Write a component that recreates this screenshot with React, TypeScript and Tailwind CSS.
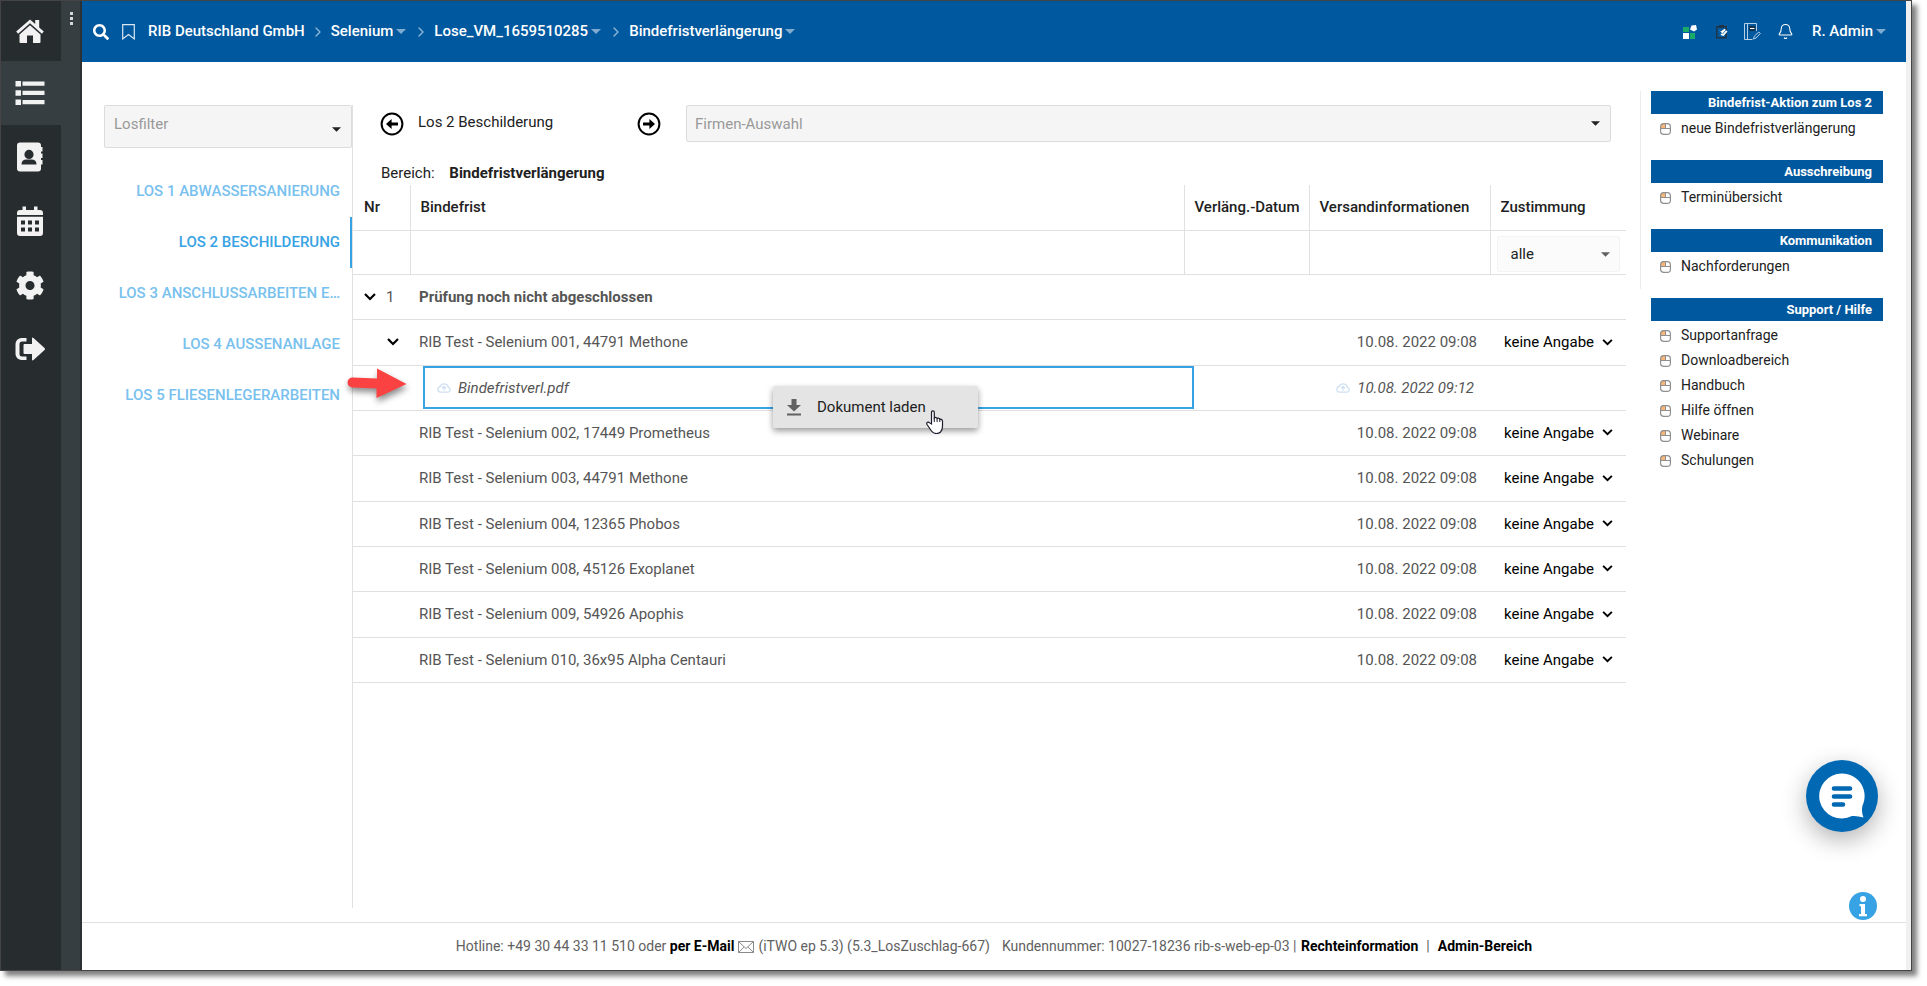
import { useState } from "react";
import { FaSearch } from "react-icons/fa";
import { Bell, ChevronRight } from "lucide-react";

const lots = [
  "Los 1 Abwassersanierung",
  "Los 2 Beschilderung",
  "Los 3 Anschlussarbeiten E…",
  "Los 4 Aussenanlage",
  "Los 5 Fliesenlegerarbeiten",
];

const crumbs = [
  { label: "RIB Deutschland GmbH", menu: false },
  { label: "Selenium", menu: true },
  { label: "Lose_VM_1659510285", menu: true },
  { label: "Bindefristverlängerung", menu: true },
];

const bidders = [
  "RIB Test - Selenium 002, 17449 Prometheus",
  "RIB Test - Selenium 003, 44791 Methone",
  "RIB Test - Selenium 004, 12365 Phobos",
  "RIB Test - Selenium 008, 45126 Exoplanet",
  "RIB Test - Selenium 009, 54926 Apophis",
  "RIB Test - Selenium 010, 36x95 Alpha Centauri",
];

const panels = [
  { title: "Bindefrist-Aktion zum Los 2", links: ["neue Bindefristverlängerung"] },
  { title: "Ausschreibung", links: ["Terminübersicht"] },
  { title: "Kommunikation", links: ["Nachforderungen"] },
  {
    title: "Support / Hilfe",
    links: ["Supportanfrage", "Downloadbereich", "Handbuch", "Hilfe öffnen", "Webinare", "Schulungen"],
  },
];

const Caret = ({ className }: { className: string }) => (
  <svg viewBox="0 0 10 5" className={className} fill="currentColor" aria-hidden="true">
    <path d="M0 0h10L5 5z" />
  </svg>
);

const Chevron = ({ className }: { className: string }) => (
  <svg viewBox="0 0 12 8" className={className} fill="none" stroke="currentColor" strokeWidth="2.2" aria-hidden="true">
    <path d="M1 1l5 5 5-5" />
  </svg>
);

const CircleArrow = ({ flip }: { flip?: boolean }) => (
  <svg viewBox="0 0 24 24" className={flip ? "h-6 w-6 rotate-180" : "h-6 w-6"} aria-hidden="true">
    <circle cx="12" cy="12" r="10.4" fill="none" stroke="#000" strokeWidth="2" />
    <path d="M6 12l5.6-5v3.5H18v3h-6.4V17z" fill="#000" />
  </svg>
);

const CloudIcon = () => (
  <svg viewBox="0 0 14 11" className="h-[11px] w-[14px]" fill="none" stroke="#cfe0f3" strokeWidth="1.3" aria-hidden="true">
    <path d="M3.3 10.2h7.6a2.5 2.5 0 0 0 .5-4.9A4.3 4.3 0 0 0 3.2 4.5a2.9 2.9 0 0 0 .1 5.7z" />
    <path d="M7 8.5v-4M5 6.3l2-2 2 2" />
  </svg>
);

const MouseIcon = () => (
  <svg viewBox="0 0 11 12" className="h-3 w-[11px]" aria-hidden="true">
    <path d="M3.5.6h2v4.4H.6V3.5Q.6.6 3.5.6z" fill="#f9b678" />
    <rect x=".6" y=".6" width="9.8" height="10.8" rx="3.2" fill="none" stroke="#8f8f8f" strokeWidth="1.2" />
    <path d="M.6 5.5h9.8M5.5.6v4.9" stroke="#8f8f8f" fill="none" />
  </svg>
);

const navIcons = [
  {
    label: "Startseite",
    icon: (
      <svg viewBox="0 0 30 26" className="h-[26px] w-[30px]" fill="#f2f2f2">
        <path d="M15 1.5 20.2 6V2h4v7.5l4.6 4.1-1.9 2.2L15 5.2 3.1 15.8l-1.9-2.2z" />
        <path d="M15 7.2 25.5 16.5V24q0 1-1 1H18v-7.5h-6V25H5.5q-1 0-1-1v-7.5z" />
      </svg>
    ),
  },
  {
    label: "Liste",
    icon: (
      <svg viewBox="0 0 30 26" className="h-[26px] w-[30px]" fill="#f2f2f2">
        <path d="M.5 1H6v5.5H.5zM.5 10.2H6v5.5H.5zM.5 19.4H6v5.5H.5zM7.5 1.6h22v4.2h-22zM7.5 10.8h22V15h-22zM7.5 20h22v4.2h-22z" />
      </svg>
    ),
  },
  {
    label: "Kontakte",
    icon: (
      <svg viewBox="0 0 28 30" className="h-[30px] w-7" fill="#f2f2f2">
        <path
          fillRule="evenodd"
          d="M4 .5h18a3 3 0 0 1 3 3V5h1.5v4.5H25v2h1.5V16H25v2h1.5v4.5H25v4a3 3 0 0 1-3 3H4a3 3 0 0 1-3-3v-23a3 3 0 0 1 3-3zM13 7.8a4.6 4.6 0 1 0 0 9.2 4.6 4.6 0 0 0 0-9.2zM5.500 22.500h15q0-5-5-5h-5q-5 0-5 5z"
        />
      </svg>
    ),
  },
  {
    label: "Kalender",
    icon: (
      <svg viewBox="0 0 28 30" className="h-[30px] w-7" fill="#f2f2f2">
        <path d="M6.5.5H10V4h8V.5h3.5V4H24a3 3 0 0 1 3 3v2H1V7a3 3 0 0 1 3-3h2.5z" />
        <path
          fillRule="evenodd"
          d="M1 10.8h26V27a3 3 0 0 1-3 3H4a3 3 0 0 1-3-3zM5 14.5v4h4v-4zM12 14.5v4h4v-4zM19 14.5v4h4v-4zM5 21.5v4h4v-4zM12 21.5v4h4v-4zM19 21.5v4h4v-4z"
        />
      </svg>
    ),
  },
  {
    label: "Einstellungen",
    icon: (
      <svg viewBox="16 0 480 512" className="h-[29px] w-[28px]" fill="#f2f2f2">
        <path d="M487.4 315.7l-42.6-24.6c4.3-23.2 4.3-47 0-70.2l42.6-24.6c4.9-2.8 7.1-8.6 5.5-14-11.1-35.6-30-67.8-54.7-94.6-3.8-4.1-10-5.1-14.8-2.3L380.8 110c-17.9-15.4-38.5-27.3-60.8-35.1V25.8c0-5.6-3.9-10.5-9.4-11.7-36.7-8.2-74.3-7.8-109.2 0-5.5 1.2-9.4 6.1-9.4 11.7V75c-22.2 7.9-42.8 19.8-60.8 35.1L88.7 85.5c-4.9-2.8-11-1.9-14.8 2.3-24.7 26.7-43.6 58.9-54.7 94.6-1.7 5.4.6 11.2 5.5 14L67.3 221c-4.3 23.2-4.3 47 0 70.2l-42.6 24.6c-4.9 2.8-7.1 8.6-5.5 14 11.1 35.6 30 67.8 54.7 94.6 3.8 4.1 10 5.1 14.8 2.3l42.6-24.6c17.9 15.4 38.5 27.3 60.8 35.1v49.2c0 5.6 3.9 10.5 9.4 11.7 36.7 8.2 74.3 7.8 109.2 0 5.5-1.2 9.4-6.1 9.4-11.7v-49.2c22.2-7.9 42.8-19.8 60.8-35.1l42.6 24.6c4.9 2.8 11 1.9 14.8-2.3 24.7-26.7 43.6-58.9 54.7-94.6 1.5-5.5-.7-11.3-5.6-14.1zM256 336c-44.1 0-80-35.9-80-80s35.9-80 80-80 80 35.9 80 80-35.9 80-80 80z" />
      </svg>
    ),
  },
  {
    label: "Abmelden",
    icon: (
      <svg viewBox="0 0 30 24" className="h-6 w-[30px]" fill="#f2f2f2">
        <path d="M11.5 1v3.5H7A2.5 2.5 0 0 0 4.5 7v10A2.5 2.5 0 0 0 7 19.5h4.5V23h-5a6 6 0 0 1-6-6V7a6 6 0 0 1 6-6z" />
        <path d="M17 1.5q0-1.5 1.5-.5l11 10q1 1 0 2l-11 10q-1.5 1-1.5-.5V17H9.5q-1 0-1-1V8q0-1 1-1H17z" />
      </svg>
    ),
  },
];

const ConsentCell = ({ name }: { name: string }) => (
  <div className="relative ml-3.5 flex w-[109px] items-center">
    <select
      aria-label={`Zustimmung ${name}`}
      className="w-full appearance-none bg-transparent text-[15px] leading-5 text-black"
    >
      <option>keine Angabe</option>
      <option>Ja</option>
      <option>Nein</option>
    </select>
    <Chevron className="pointer-events-none absolute right-0 h-[7px] w-[11px] text-black" />
  </div>
);

const Header = () => (
  <header className="flex h-[61px] items-center bg-[#00589e] pr-5 pl-[11px] text-[15px] font-medium text-white">
    <button aria-label="Suche">
      <FaSearch className="h-4 w-4" />
    </button>
    <button aria-label="Lesezeichen" className="ml-[13px]">
      <svg viewBox="0 0 13 16" className="h-4 w-[13px]" fill="none" stroke="#dbe8f3" strokeWidth="1.2">
        <path d="M.7.7h11.6v14.2L6.500 10.500.7 14.900z" />
      </svg>
    </button>
    <nav className="ml-[13px] flex items-center" aria-label="Pfad">
      {crumbs.map((crumb, index) => (
        <div key={crumb.label} className="flex items-center">
          {index > 0 && <ChevronRight className="mx-[5px] h-4 w-4 text-[#8fb7d8]" strokeWidth={2} />}
          <a href="#" className="flex items-center">
            {crumb.label}
            {crumb.menu && <Caret className="mr-0.5 ml-[3px] h-[5px] w-2.5 text-[#7fabd0]" />}
          </a>
        </div>
      ))}
    </nav>
    <div className="ml-auto flex items-center">
      <button aria-label="Apps">
        <svg viewBox="0 0 14 14" className="h-3.5 w-3.5">
          <path d="M0 2h6v5H0z" fill="#1aab68" />
          <path d="M8.500.5l4.500-.5 1 4.500-3 2-4-2z" fill="#fff" />
          <path d="M0 8h6v6H0z" fill="#fff" />
          <path d="M7 8h5v6H7z" fill="#1aab68" />
        </svg>
      </button>
      <button aria-label="Aufgaben" className="ml-[19px]">
        <svg viewBox="0 0 12 15" className="h-[15px] w-3">
          <path d="M.8 2.800h9.400v11H.8z" fill="none" stroke="#1f3344" strokeWidth="1.4" />
          <path d="M3 1h5v2.800H3z" fill="#1f3344" />
          <path d="M2.200 5.500 4.800 7.500 8.500 4.800 11.500 7.500 7.500 12 4.500 11 6 9z" fill="#fff" />
          <path d="M6.500 10l3.500-4" stroke="#00589e" strokeWidth=".8" />
        </svg>
      </button>
      <button aria-label="Notizen" className="ml-4">
        <svg viewBox="0 0 17 17" className="h-[17px] w-[17px]" fill="none" stroke="#b9d0e4">
          <path d="M12.500 8V.5H.5v16h8M3.500.5v16" />
          <path d="M5.500 3.500H11v4H5.500z" stroke="#16324a" fill="#16324a" />
          <path d="M6 5.500h4.500" stroke="#fff" />
          <path d="M9.500 16l.8-2.800L14.800 9l1.500 1.500-4.300 4.500z" />
        </svg>
      </button>
      <button aria-label="Benachrichtigungen" className="ml-4">
        <Bell className="h-[17px] w-[17px]" strokeWidth={1.5} />
      </button>
      <a href="#" className="ml-[18px] flex items-center">
        R. Admin
        <Caret className="ml-[3px] h-[5px] w-2.5 text-[#7fabd0]" />
      </a>
    </div>
  </header>
);

const LotNav = () => {
  const [active, setActive] = useState(1);

  return (
    <nav className="flex w-[249px] shrink-0 flex-col border-r border-[#e0e0e0]" aria-label="Lose">
      <div className="relative mb-[18px]">
        <input
          aria-label="Losfilter"
          placeholder="Losfilter"
          className="h-[43px] w-full rounded-xs border border-[#dcdcdc] bg-[#f5f5f5] px-[9px] pb-[5px] text-[15px] placeholder:text-[#999]"
        />
        <Caret className="absolute top-[22px] right-[11px] h-[5px] w-[9px] text-[#212121]" />
      </div>
      {lots.map((lot, index) => (
        <button
          key={lot}
          onClick={() => setActive(index)}
          className={
            index === active
              ? "h-[51px] border-r-2 border-[#38a3e4] pr-[10px] text-right text-[15px] font-medium whitespace-nowrap text-[#38a3e4] uppercase"
              : "h-[51px] pr-3 text-right text-[15px] font-medium whitespace-nowrap text-[#78c1ee] uppercase"
          }
        >
          {lot}
        </button>
      ))}
    </nav>
  );
};

const ContextMenu = () => (
  <div className="absolute top-[18px] left-[360px] z-10">
    <button className="flex h-[42px] w-[205px] items-center rounded-xs bg-[#e4e4e4] pl-3.5 text-[15px] text-[#212121] not-italic shadow-[0_3px_6px_rgba(0,0,0,0.4)]">
      <svg viewBox="0 0 14 17" className="mr-4 h-[17px] w-3.5" fill="#616161">
        <path d="M4.500 0h5v6H14l-7 6.500L0 6h4.500zM0 14.500h14v2H0z" />
      </svg>
      Dokument laden
    </button>
    <svg viewBox="0 0 18 24" className="pointer-events-none absolute top-6 left-[153px] h-6 w-[18px]">
      <path
        d="M5.500 14V2.500q0-1.700 1.400-1.700t1.400 1.700V8q.8-.8 1.800-.5.8.2 1 1 .9-.6 1.800-.2.8.3.9 1.100.8-.4 1.600 0 1.100.5 1.100 1.900v5q0 3.500-2 5.700Q13 23.500 10.500 23.500q-3.200 0-5-2.500L1 14.500q-.7-1.600.4-2.200 1.200-.5 2.300.6z"
        fill="#fff"
        stroke="#1c1c2c"
        strokeWidth="1.2"
      />
      <path d="M8.300 8v4M11.100 8.500V12M13.800 9.500V12" stroke="#1c1c2c" fill="none" />
    </svg>
  </div>
);

const BidTable = () => (
  <table className="w-full table-fixed border-collapse text-left text-[15px] leading-5 text-[#555]">
    <colgroup>
      <col className="w-[57px]" />
      <col />
      <col className="w-[125px]" />
      <col className="w-[181px]" />
      <col className="w-[136px]" />
    </colgroup>
    <thead className="text-[#212121]">
      <tr className="h-[45px] border-b border-[#e0e0e0]">
        <th className="border-r border-[#e0e0e0] pl-[11px] font-medium">Nr</th>
        <th className="border-r border-[#e0e0e0] pl-[10px] font-medium">Bindefrist</th>
        <th className="border-r border-[#e0e0e0] pl-[10px] font-medium">Verläng.-Datum</th>
        <th className="border-r border-[#e0e0e0] pl-[10px] font-medium">Versandinformationen</th>
        <th className="pl-[10px] font-medium">Zustimmung</th>
      </tr>
      <tr className="h-[44px] border-b border-[#e0e0e0]">
        {["Nr", "Bindefrist", "Verläng.-Datum", "Versandinformationen"].map((column) => (
          <td key={column} className="border-r border-[#e0e0e0]">
            <input aria-label={`${column} filtern`} className="block h-9 w-full bg-transparent px-2 outline-none" />
          </td>
        ))}
        <td className="px-1.5 pt-1">
          <div className="relative flex items-center">
            <select
              aria-label="Zustimmung filtern"
              className="h-9 w-full appearance-none rounded-xs border border-[#f4f4f4] bg-[#fbfbfb] px-[13px] text-[15px] text-[#212121]"
            >
              <option>alle</option>
              <option>Ja</option>
              <option>Nein</option>
            </select>
            <Caret className="pointer-events-none absolute right-2.5 h-[5px] w-[9px] text-[#616161]" />
          </div>
        </td>
      </tr>
    </thead>
    <tbody>
      <tr className="h-[45px] border-b border-[#e0e0e0]">
        <td>
          <button aria-label="Gruppe zuklappen" className="ml-[11px] flex items-center text-[15px]">
            <Chevron className="mr-2.5 h-2 w-3 text-black" />1
          </button>
        </td>
        <td className="pl-[9px] font-bold">Prüfung noch nicht abgeschlossen</td>
        <td />
        <td />
        <td />
      </tr>
      <tr className="h-[46px] border-b border-[#e0e0e0]">
        <td>
          <button aria-label="Bieter zuklappen" className="ml-[34px] block">
            <Chevron className="h-2 w-3 text-black" />
          </button>
        </td>
        <td className="pl-[9px]">RIB Test - Selenium 001, 44791 Methone</td>
        <td />
        <td className="pr-[13px] text-right">10.08. 2022 09:08</td>
        <td>
          <ConsentCell name="Selenium 001" />
        </td>
      </tr>
      <tr className="h-[45px] border-b border-[#e0e0e0] italic">
        <td className="relative">
          <svg
            viewBox="0 0 60 32"
            className="absolute top-px -left-1.5 z-10 h-8 w-[60px] drop-shadow-[1px_4px_3px_rgba(0,0,0,0.45)]"
            fill="#fb4242"
          >
            <path d="M5.500 10.500 30 11.500V1.500L59.500 17 29.500 31V21.500L5.500 20.500a5 5 0 0 1 0-10z" />
          </svg>
        </td>
        <td>
          <div className="relative -mr-[10px] ml-[13px] flex h-[43px] items-center border-2 border-[#38a3e4] pl-3">
            <CloudIcon />
            <a href="#" className="ml-[7px]">
              Bindefristverl.pdf
            </a>
            <div className="absolute top-0 left-[-12px]">
              <ContextMenu />
            </div>
          </div>
        </td>
        <td />
        <td className="pr-4">
          <div className="flex items-center justify-end gap-[7px]">
            <CloudIcon />
            10.08. 2022 09:12
          </div>
        </td>
        <td />
      </tr>
      {bidders.map((bidder) => (
        <tr key={bidder} className="h-[45px] border-b border-[#e0e0e0] [&:nth-child(3n+2)]:h-[46px]">
          <td />
          <td className="pl-[9px]">{bidder}</td>
          <td />
          <td className="pr-[13px] text-right">10.08. 2022 09:08</td>
          <td>
            <ConsentCell name={bidder} />
          </td>
        </tr>
      ))}
    </tbody>
  </table>
);

const SidePanels = () => (
  <aside className="-mt-3.5 ml-3.5 w-[243px] shrink-0">
    <div className="flex">
      <div className="mr-[10px] h-[198px] w-px bg-[#ebebeb]" />
      <div className="flex flex-1 flex-col gap-[19px]">
        {panels.map((panel) => (
          <section key={panel.title}>
            <h2 className="h-[23px] bg-[#00589e] pr-[11px] text-right text-[13px] leading-[23px] font-bold text-white">
              {panel.title}
            </h2>
            <ul className="pt-[2px]">
              {panel.links.map((link) => (
                <li key={link}>
                  <a href="#" className="flex h-[25px] items-center gap-2.5 pl-[9px] text-[14px] text-[#212121]">
                    <MouseIcon />
                    {link}
                  </a>
                </li>
              ))}
            </ul>
          </section>
        ))}
      </div>
    </div>
  </aside>
);

const Footer = () => (
  <footer className="flex h-[48px] items-center justify-center border-t border-[#e0e0e0] text-[14px] whitespace-pre text-[#616161]">
    <span>Hotline: +49 30 44 33 11 510 oder </span>
    <a href="#" className="flex items-center font-bold text-black">
      per E-Mail
      <svg viewBox="0 0 16 12" className="mx-1 h-3 w-4" fill="none" stroke="#8a8a8a">
        <path d="M.5.5h15v11H.5zM.5.5 8 7.500l7.500-7M.5 11.500 6 6M15.500 11.500 10 6" />
      </svg>
    </a>
    <span>(iTWO ep 5.3) (5.3_LosZuschlag-667)</span>
    <span className="mr-px ml-3">Kundennummer: 10027-18236 rib-s-web-ep-03 | </span>
    <a href="#" className="font-bold text-black">
      Rechteinformation
    </a>
    <span className="mx-2">|</span>
    <a href="#" className="font-bold text-black">
      Admin-Bereich
    </a>
  </footer>
);

const App = () => {
  return (
    <div className="h-screen bg-white pr-[15px] pb-[15px] font-['Roboto',sans-serif]">
      <div className="relative flex h-full border border-[#444] bg-white shadow-[5px_5px_5px_rgba(0,0,0,0.5)]">
        <nav className="w-[60px] shrink-0 bg-[#272c2f]" aria-label="Hauptmenü">
          {navIcons.map((item, index) => (
            <button
              key={item.label}
              aria-label={item.label}
              className={
                index === 1
                  ? "flex h-16 w-full items-center justify-center bg-[#363e41] pr-0.5"
                  : "flex h-16 w-full items-center justify-center pr-0.5 first:h-[60px]"
              }
            >
              {item.icon}
            </button>
          ))}
        </nav>
        <div className="w-[21px] shrink-0 border-r-2 border-[#2b3134] bg-[#363e41] pt-[11px] pl-[9px]">
          <button aria-label="Menü" className="flex flex-col gap-0.5">
            <i className="h-[3px] w-[3px] bg-[#d5d7d8]" />
            <i className="h-[3px] w-[3px] bg-[#d5d7d8]" />
            <i className="h-[3px] w-[3px] bg-[#d5d7d8]" />
          </button>
        </div>
        <div className="flex min-w-0 flex-1 flex-col">
          <Header />
          <div className="flex min-h-0 flex-1 pt-[43px] pr-[23px] pb-3.5 pl-[22px]">
            <LotNav />
            <main className="min-w-0 flex-1">
              <div className="flex h-[37px] items-center pr-[15px] pl-[27px]">
                <button aria-label="Voriges Los">
                  <CircleArrow />
                </button>
                <span className="mr-auto ml-[14px] pb-0.5 text-[15px] text-[#212121]">Los 2 Beschilderung</span>
                <button aria-label="Nächstes Los" className="mr-[25px]">
                  <CircleArrow flip />
                </button>
                <div className="relative w-[925px]">
                  <input
                    aria-label="Firmen-Auswahl"
                    placeholder="Firmen-Auswahl"
                    className="block h-[37px] w-full rounded-xs border border-[#dcdcdc] bg-[#f5f5f5] px-2 text-[15px] placeholder:text-[#999]"
                  />
                  <Caret className="absolute top-4 right-[11px] h-[5px] w-[9px] text-[#212121]" />
                </div>
              </div>
              <div className="flex h-[43px] items-end pl-7 text-[15px] text-[#212121]">
                <p className="pb-px">
                  Bereich: <strong className="ml-[11px] font-bold">Bindefristverlängerung</strong>
                </p>
              </div>
              <BidTable />
            </main>
            <SidePanels />
          </div>
          <Footer />
        </div>
        <div className="w-[5px] shrink-0 bg-[#f0f0f0]" />
        <button
          aria-label="Chat"
          className="absolute right-[33px] bottom-[138px] flex h-[72px] w-[72px] items-center justify-center rounded-full bg-[#0168b3] shadow-[0_8px_24px_rgba(0,0,0,0.3)]"
        >
          <svg viewBox="0 0 46 46" className="h-[46px] w-[46px]">
            <path d="M23 .5a22.5 22.5 0 1 0 10 42.5q5-.5 11.5 1.500-2.500-6-1-12A22.500 22.500 0 0 0 23 .5z" fill="#fff" />
            <path d="M15 15.5h16M15 23.5h16M15 31.5h9" stroke="#0168b3" strokeWidth="4.6" strokeLinecap="round" />
          </svg>
        </button>
        <button aria-label="Information" className="absolute right-[34px] bottom-[50px]">
          <svg viewBox="0 0 28 28" className="h-7 w-7">
            <circle cx="14" cy="14" r="14" fill="#38a3e4" />
            <circle cx="14" cy="7" r="3" fill="#fff" />
            <path d="M10.500 12H16v10h2v2.200h-8V22h2v-7.800h-1.500z" fill="#fff" />
          </svg>
        </button>
      </div>
    </div>
  );
};

export default App;
